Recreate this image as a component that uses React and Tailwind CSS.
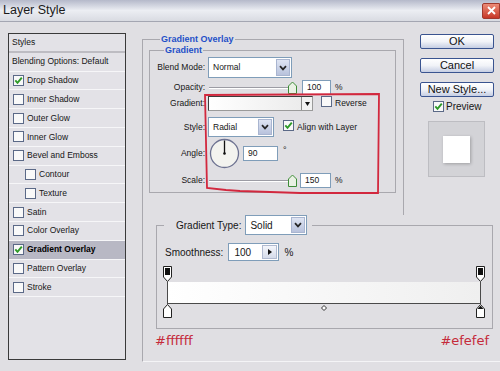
import React from 'react';

const Check = ({ checked }) => (
    <span className="inline-flex h-[11px] w-[11px] shrink-0 items-center justify-center border border-[#5b6987] bg-[#f9f9f9]">
        {checked && (
            <svg width="9" height="9" viewBox="0 0 9 9">
                <path d="M1.3 4.4 L3.5 6.9 L7.8 1.6" fill="none" stroke="#2e9a28" strokeWidth="1.9" />
            </svg>
        )}
    </span>
);

const Chevron = () => (
    <span className="my-[1px] mr-[1px] flex w-[14px] shrink-0 items-center justify-center border border-[#a9b5d0] bg-gradient-to-b from-[#dfe5f3] to-[#b8c2dc]">
        <svg width="8" height="6" viewBox="0 0 8 6">
            <path d="M1 1.2 L4 4.4 L7 1.2" fill="none" stroke="#262626" strokeWidth="1.7" />
        </svg>
    </span>
);

const Select = ({ value, className }) => (
    <div className={`flex border border-[#7f9db9] bg-white ${className}`}>
        <span className="flex flex-1 items-center pl-[4px]">{value}</span>
        <Chevron />
    </div>
);

const Field = ({ value, className }) => (
    <div className={`flex items-center border border-[#7f9db9] bg-white pl-[4px] ${className}`}>{value}</div>
);

const Slider = () => (
    <svg width="88" height="16" viewBox="0 0 88 16" className="ml-[4px] shrink-0">
        <rect x="0" y="8" width="84" height="1" fill="#9c9ca4" />
        <rect x="0" y="9" width="84" height="1" fill="#ffffff" />
        <path d="M79.5 14.5 V7 L83.5 3 L87.5 7 V14.5 Z" fill="#e9f1e4" stroke="#3f8d39" />
    </svg>
);

const Label = ({ children }) => (
    <span className="w-[55px] shrink-0 text-right">{children}</span>
);

const styleRows = [
    { label: 'Drop Shadow', checked: true },
    { label: 'Inner Shadow' },
    { label: 'Outer Glow' },
    { label: 'Inner Glow' },
    { label: 'Bevel and Emboss' },
    { label: 'Contour', indent: true },
    { label: 'Texture', indent: true },
    { label: 'Satin' },
    { label: 'Color Overlay' },
    { label: 'Gradient Overlay', checked: true, active: true },
    { label: 'Pattern Overlay' },
    { label: 'Stroke' },
];

const TopStop = () => (
    <svg width="9" height="16" viewBox="0 0 9 16">
        <path d="M0.5 0.5 H8.5 V11 L4.5 15.5 L0.5 11 Z" fill="#ffffff" stroke="#222" />
        <rect x="2" y="2" width="5" height="7" fill="#111" />
    </svg>
);

const BottomStop = ({ selected }) => (
    <svg width="9" height="14" viewBox="0 0 9 14">
        <path d="M0.5 13.5 V5 L4.5 0.5 L8.5 5 V13.5 Z" fill="#ffffff" stroke="#222" />
        {selected && <path d="M1.5 5 L4.5 1.8 L7.5 5 Z" fill="#111" />}
    </svg>
);

const Button = ({ children }) => (
    <div className="flex h-[15px] items-center justify-center rounded-[2px] border border-[#3a5490] bg-gradient-to-b from-white via-[#f1f3f8] to-[#c6cee3] text-[11px] leading-none text-[#111]">
        {children}
    </div>
);

export default function App() {
    return (
        <div className="relative h-[371px] w-[500px] overflow-hidden bg-[#e0dfe3] font-['Liberation_Sans',Arial,sans-serif] text-[#161616]">
            {/* title bar */}
            <div className="flex h-[22px] items-center justify-between border-b border-[#a4a6b2] bg-gradient-to-b from-[#b5b9ca] via-[#eceef3] to-[#d9dbe2] pl-[3px]">
                <span className="text-[12.5px] text-[#1b1b1b]">Layer Style</span>
                <div className="flex h-[16px] w-[18px] items-center justify-center rounded-l-[2px] border border-[#a0392d] bg-gradient-to-b from-[#ec8a76] to-[#c63526]">
                    <svg width="9" height="9" viewBox="0 0 9 9">
                        <path d="M1 1 L8 8 M8 1 L1 8" stroke="#fff" strokeWidth="1.8" />
                    </svg>
                </div>
            </div>

            <div className="flex pl-[8px] pt-[11px]">
                {/* styles list */}
                <div className="h-[327px] w-[118px] shrink-0 border border-[#3a3a3a] bg-[#e3e2e7] text-[8.5px]">
                    <div className="flex h-[18.8px] items-center border-b-2 border-[#bdbcc2] pl-[3px]">Styles</div>
                    <div className="flex h-[18.8px] items-center border-b border-[#f6f6f8] pl-[3px]">Blending Options: Default</div>
                    {styleRows.map((row) => (
                        <div
                            key={row.label}
                            className={`flex h-[18.8px] items-center gap-[3px] border-b border-[#f6f6f8] ${row.indent ? 'pl-[16px]' : 'pl-[4px]'} ${row.active ? 'bg-[#b8b8c4] font-bold text-black' : ''}`}
                        >
                            <Check checked={row.checked} />
                            <span>{row.label}</span>
                        </div>
                    ))}
                </div>

                {/* right column */}
                <div className="ml-[16px] flex flex-1 flex-col">
                    <div className="flex">
                        <fieldset className="h-[182px] w-[262px] shrink-0 border-x border-t border-[#a9a8ae] pl-[6px] pr-[7px]">
                            <legend className="ml-[11px] px-[1px] text-[9px] font-bold leading-[12px] text-[#1f4fc8]">Gradient Overlay</legend>
                            <fieldset className="h-[148px] border border-[#a9a8ae] text-[8.5px]">
                                <legend className="ml-[14px] px-[1px] text-[9px] font-bold leading-[10px] text-[#1f4fc8]">Gradient</legend>
                                <div className="flex flex-col">
                                    <div className="mt-[2px] flex h-[21px] items-center">
                                        <Label>Blend Mode:</Label>
                                        <Select value="Normal" className="ml-[3px] h-[21px] w-[84px]" />
                                    </div>
                                    <div className="mt-[1px] flex h-[16px] items-center">
                                        <Label>Opacity:</Label>
                                        <Slider />
                                        <Field value="100" className="ml-[5px] h-[15px] w-[29px]" />
                                        <span className="ml-[4px]">%</span>
                                    </div>
                                    <div className="mt-[1px] flex h-[15px] items-center">
                                        <Label>Gradient:</Label>
                                        <div className="ml-[3px] flex h-[15px] w-[105px] border border-[#3d3d3d] border-b-[#9a9a9a] border-r-[#9a9a9a]">
                                            <span className="flex-1 bg-gradient-to-r from-white to-[#ececec]" />
                                            <span className="flex w-[11px] items-center justify-center border-l border-[#8a8a8a] bg-[#f2f2f2]">
                                                <svg width="5" height="4" viewBox="0 0 5 4"><path d="M0 0 H5 L2.5 4 Z" fill="#111" /></svg>
                                            </span>
                                        </div>
                                        <span className="ml-[8px]"><Check /></span>
                                        <span className="ml-[3px]">Reverse</span>
                                    </div>
                                    <div className="mt-[6px] flex h-[20px] items-center">
                                        <Label>Style:</Label>
                                        <Select value="Radial" className="ml-[3px] h-[20px] w-[66px]" />
                                        <span className="ml-[9px]"><Check checked /></span>
                                        <span className="ml-[3px]">Align with Layer</span>
                                    </div>
                                    <div className="mt-[1px] flex h-[31px] items-center">
                                        <Label>Angle:</Label>
                                        <svg width="31" height="31" viewBox="0 0 31 31" className="ml-[4px] shrink-0">
                                            <circle cx="15.5" cy="15.5" r="14" fill="#f3f3ef" stroke="#6d7291" strokeWidth="1.3" />
                                            <path d="M15.5 15.5 V2.5" stroke="#111" strokeWidth="1.3" />
                                            <circle cx="15.5" cy="15.5" r="1.3" fill="#111" />
                                        </svg>
                                        <Field value="90" className="ml-[3px] h-[15px] w-[35px]" />
                                        <span className="ml-[5px] -mt-[6px] text-[9px]">°</span>
                                    </div>
                                    <div className="mt-[3px] flex h-[16px] items-center">
                                        <Label>Scale:</Label>
                                        <Slider />
                                        <Field value="150" className="ml-[3px] h-[15px] w-[31px]" />
                                        <span className="ml-[4px]">%</span>
                                    </div>
                                </div>
                            </fieldset>
                        </fieldset>

                        {/* buttons */}
                        <div className="ml-[16px] flex w-[74px] flex-col pt-[1px]">
                            <Button>OK</Button>
                            <div className="mt-[9px]"><Button>Cancel</Button></div>
                            <div className="mt-[9px]"><Button>New Style...</Button></div>
                            <div className="mt-[3px] flex h-[12px] items-center pl-[13px] text-[10px]">
                                <Check checked />
                                <span className="ml-[2px]">Preview</span>
                            </div>
                            <div className="ml-[8px] mt-[9px] flex h-[56px] w-[57px] items-center justify-center border border-[#bdbdc2] bg-[#d3d3d7]">
                                <div className="h-[27px] w-[27px] bg-white shadow-[1px_1px_3px_rgba(0,0,0,0.25)]" />
                            </div>
                        </div>
                    </div>

                    {/* gradient editor */}
                    <div className="h-[147px] border-b border-l border-[#a9a8ae] border-b-[#f4f4f6] pl-[13px] text-[10px]">
                        <fieldset className="h-[114px] w-[337px] border border-[#a9a8ae]">
                            <legend className="ml-[7px] pl-[12px] pr-[5px]">
                                <div className="flex items-center">
                                    <span>Gradient Type:</span>
                                    <Select value="Solid" className="ml-[4px] h-[20px] w-[62px]" />
                                </div>
                            </legend>
                            <div className="mt-[8px] flex h-[18px] items-center pl-[8px]">
                                <span>Smoothness:</span>
                                <div className="ml-[5px] flex h-[18px] w-[51px] border border-[#7f9db9] bg-white">
                                    <span className="flex flex-1 items-center pl-[5px]">100</span>
                                    <span className="my-[1px] mr-[1px] flex w-[15px] items-center justify-center border border-[#b1bad0] bg-gradient-to-b from-[#f4f6fb] to-[#d5dbea]">
                                        <svg width="4" height="6" viewBox="0 0 4 6"><path d="M0 0 L4 3 L0 6 Z" fill="#111" /></svg>
                                    </span>
                                </div>
                                <span className="ml-[5px]">%</span>
                            </div>
                            <div className="ml-[6px] mt-[5px] flex w-[322px] flex-col">
                                <div className="flex h-[16px] justify-between">
                                    <TopStop />
                                    <TopStop />
                                </div>
                                <div className="mx-[4px] h-[22px] border-x border-b border-[#4a4a4a] border-t-[#cfcfcf] bg-gradient-to-r from-white to-[#efefef]" />
                                <div className="flex h-[14px] items-start justify-between">
                                    <BottomStop />
                                    <svg width="6" height="6" viewBox="0 0 6 6" className="mt-[1px]">
                                        <path d="M3 0.5 L5.5 3 L3 5.5 L0.5 3 Z" fill="#fff" stroke="#333" />
                                    </svg>
                                    <BottomStop selected />
                                </div>
                            </div>
                        </fieldset>
                        <div className="-ml-[1px] mt-[4px] flex w-[336px] justify-between pr-[2px] font-['DejaVu_Sans',Verdana,sans-serif] text-[13px] leading-[16px] text-[#c52a3a]">
                            <span>#ffffff</span>
                            <span>#efefef</span>
                        </div>
                    </div>
                </div>
            </div>

            {/* hand-drawn annotation */}
            <svg className="pointer-events-none absolute left-0 top-0" width="500" height="371" viewBox="0 0 500 371">
                <path
                    d="M205 95 L379 94 L378 193 L300 193 L240 191 L226 190 L207 188 Z"
                    fill="none"
                    stroke="#d2283e"
                    strokeWidth="1.8"
                />
            </svg>
        </div>
    );
}
